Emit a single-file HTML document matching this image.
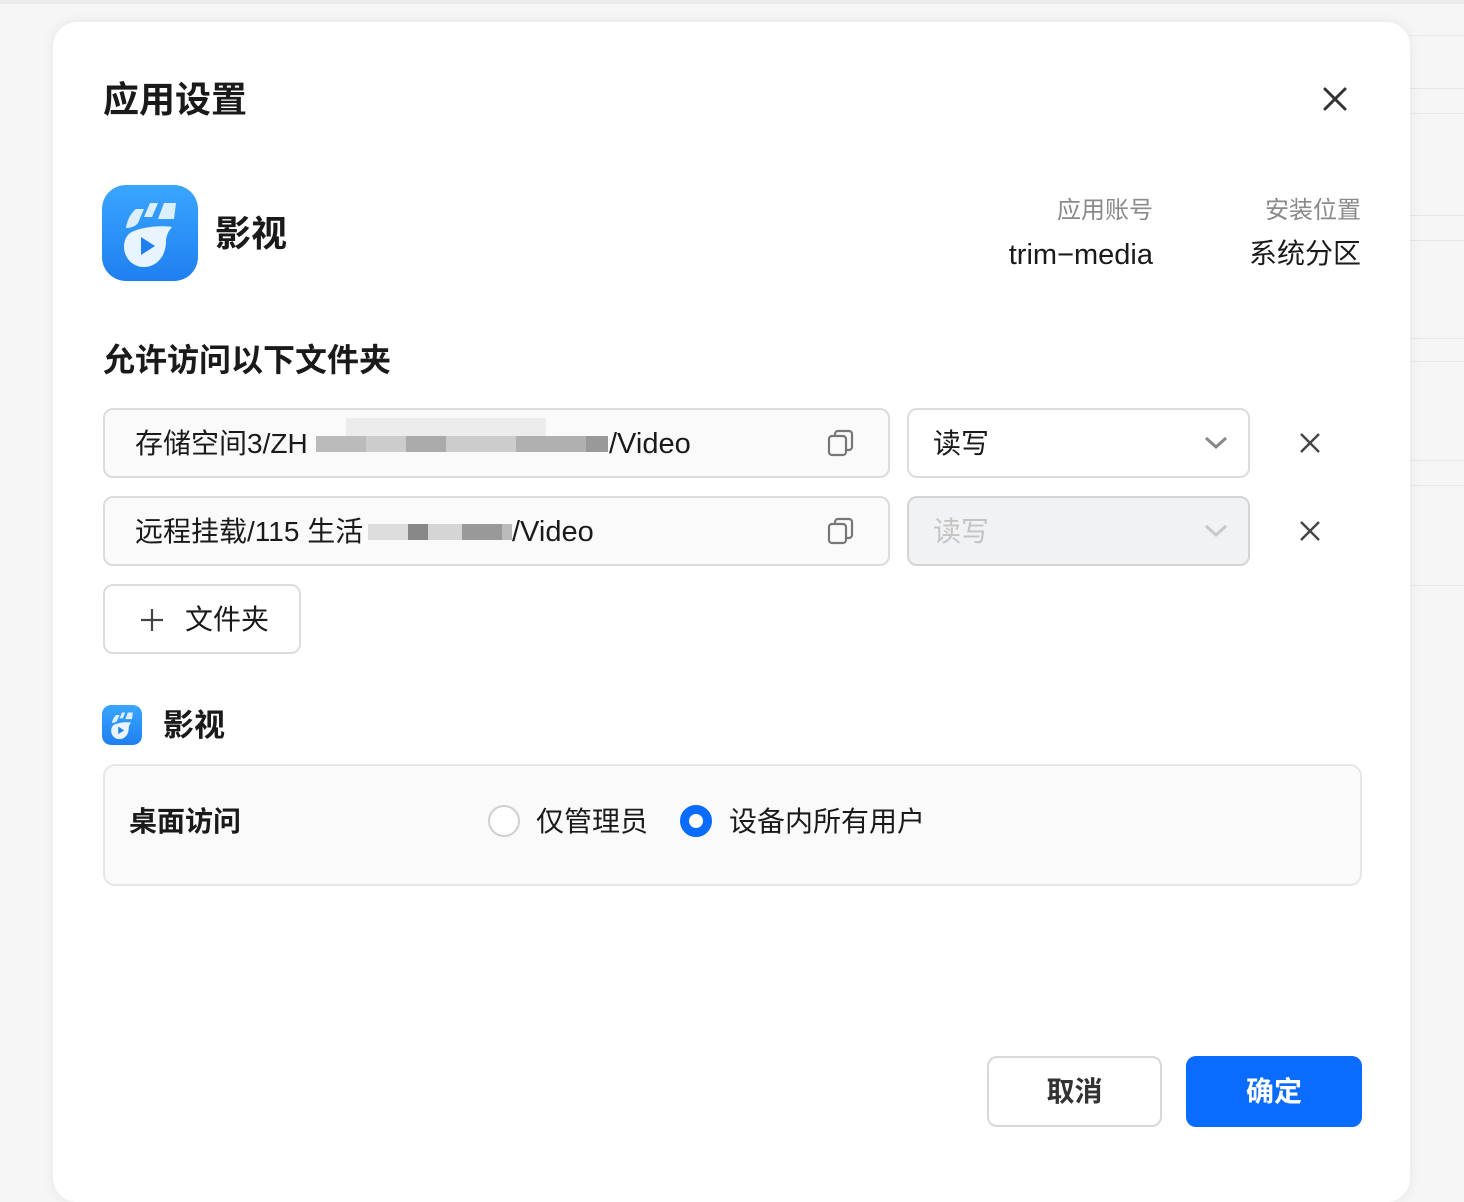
<!DOCTYPE html>
<html><head><meta charset="utf-8"><style>
*{box-sizing:border-box;margin:0;padding:0}
body{width:1464px;height:1176px;overflow:hidden;background:#f6f6f6;font-family:"Liberation Sans","Noto Sans CJK SC",sans-serif;color:#1a1a1a;position:relative}
.bgline{position:absolute;left:1410px;right:0;height:1px;background:#e8e8e8}
.modal{position:absolute;left:53px;top:22px;width:1357px;height:1180px;background:#fff;border-radius:24px;box-shadow:0 0 12px rgba(0,0,0,.08)}
.a{position:absolute}
.t{white-space:nowrap;line-height:1}
.inp{position:absolute;height:70px;border:2px solid #dcdcdc;border-radius:10px;background:#fafafa}
.blk{position:absolute;height:16px;top:28px}
</style></head><body>
<div style="position:absolute;left:0;top:0;right:0;height:4px;background:#ececec"></div>
<div class="bgline" style="top:35px"></div><div class="bgline" style="top:88px"></div><div class="bgline" style="top:113px"></div><div class="bgline" style="top:215px"></div><div class="bgline" style="top:240px"></div><div class="bgline" style="top:338px"></div><div class="bgline" style="top:361px"></div><div class="bgline" style="top:460px"></div><div class="bgline" style="top:485px"></div><div class="bgline" style="top:585px"></div>
<div class="modal"></div>

<div class="a t" style="left:103px;top:82px;font-size:36px;font-weight:bold">应用设置</div>
<svg class="a" style="left:1322px;top:86px" width="26" height="26" viewBox="0 0 26 26"><path d="M3 3L23 23M23 3L3 23" stroke="#333" stroke-width="3" stroke-linecap="round"/></svg>

<svg class="a" style="left:102px;top:185px" width="96" height="96" viewBox="0 0 96 96">
<defs><linearGradient id="g" x1="0" y1="0" x2="0" y2="1"><stop offset="0" stop-color="#3aa6ff"/><stop offset="1" stop-color="#1f7ff0"/></linearGradient></defs>
<rect width="96" height="96" rx="24" fill="url(#g)"/>
<path d="M34 24h8l-6 14c-3 4-8 5-12 5 1-8 5-15 10-19z" fill="#dcefff"/>
<path d="M48 18h8l-6 14h-8z" fill="#dcefff"/><path d="M62 18h12l-2 16h-16z" fill="#dcefff"/>
<path d="M28 48c10-6 30-8 42-6-4 4-6 10-6 14 0 16-10 26-22 26-12 0-20-10-20-20 0-6 2-11 6-14z" fill="#e8f4ff"/>
<path d="M39 52l14 9-14 9z" fill="#1f7ff0"/>
</svg>
<div class="a t" style="left:215px;top:216px;font-size:36px;font-weight:bold">影视</div>

<div class="a t" style="right:311px;top:199px;font-size:24px;color:#8a8a8a">应用账号</div>
<div class="a t" style="right:311px;top:241px;font-size:29px">trim−media</div>
<div class="a t" style="right:103px;top:199px;font-size:24px;color:#8a8a8a">安装位置</div>
<div class="a t" style="right:103px;top:240px;font-size:28px">系统分区</div>

<div class="a t" style="left:103px;top:344px;font-size:32px;font-weight:bold">允许访问以下文件夹</div>

<div class="inp" style="left:103px;top:408px;width:787px"></div>
<div class="a t" style="left:135px;top:430px;font-size:28px">存储空间3/ZH</div>
<div class="a" style="left:316px;top:408px;width:292px;height:70px">
<div class="blk" style="left:0;width:50px;background:#bbb"></div><div class="blk" style="left:50px;width:40px;background:#ccc"></div><div class="blk" style="left:90px;width:40px;background:#aaa"></div><div class="blk" style="left:130px;width:70px;background:#ccc"></div><div class="blk" style="left:200px;width:70px;background:#b0b0b0"></div><div class="blk" style="left:270px;width:22px;background:#999"></div>
<div style="position:absolute;left:30px;top:10px;width:200px;height:18px;background:#ececec"></div></div>
<div class="a t" style="left:609px;top:430px;font-size:29px">/Video</div>
<svg class="a" style="left:826px;top:428px" width="30" height="30" viewBox="0 0 30 30"><rect x="3" y="8" width="17" height="19" rx="3" fill="none" stroke="#777" stroke-width="2.2"/><path d="M9 8V6a3 3 0 0 1 3-3h11a3 3 0 0 1 3 3v13a3 3 0 0 1-3 3h-3" fill="none" stroke="#777" stroke-width="2.2"/></svg>

<div class="inp" style="left:907px;top:408px;width:343px;background:#fff"></div>
<div class="a t" style="left:933px;top:430px;font-size:28px">读写</div>
<svg class="a" style="left:1204px;top:436px" width="24" height="14" viewBox="0 0 24 14"><path d="M2 2l10 9 10-9" fill="none" stroke="#888" stroke-width="3"/></svg>
<svg class="a" style="left:1300px;top:433px" width="20" height="20" viewBox="0 0 20 20"><path d="M1 1L19 19M19 1L1 19" stroke="#444" stroke-width="2.4"/></svg>

<div class="inp" style="left:103px;top:496px;width:787px"></div>
<div class="a t" style="left:135px;top:518px;font-size:28px">远程挂载/115 生活</div>
<div class="a" style="left:368px;top:496px;width:144px;height:70px">
<div class="blk" style="left:0;width:40px;background:#ddd"></div><div class="blk" style="left:40px;width:20px;background:#888"></div><div class="blk" style="left:60px;width:34px;background:#d5d5d5"></div><div class="blk" style="left:94px;width:40px;background:#999"></div><div class="blk" style="left:134px;width:10px;background:#bbb"></div></div>
<div class="a t" style="left:512px;top:518px;font-size:29px">/Video</div>
<svg class="a" style="left:826px;top:516px" width="30" height="30" viewBox="0 0 30 30"><rect x="3" y="8" width="17" height="19" rx="3" fill="none" stroke="#777" stroke-width="2.2"/><path d="M9 8V6a3 3 0 0 1 3-3h11a3 3 0 0 1 3 3v13a3 3 0 0 1-3 3h-3" fill="none" stroke="#777" stroke-width="2.2"/></svg>

<div class="inp" style="left:907px;top:496px;width:343px;background:#f1f2f4;border-color:#d4d4d4"></div>
<div class="a t" style="left:933px;top:518px;font-size:28px;color:#c4c4c4">读写</div>
<svg class="a" style="left:1204px;top:524px" width="24" height="14" viewBox="0 0 24 14"><path d="M2 2l10 9 10-9" fill="none" stroke="#c8c8c8" stroke-width="3"/></svg>
<svg class="a" style="left:1300px;top:521px" width="20" height="20" viewBox="0 0 20 20"><path d="M1 1L19 19M19 1L1 19" stroke="#444" stroke-width="2.4"/></svg>

<div class="inp" style="left:103px;top:584px;width:198px;background:#fff"></div>
<svg class="a" style="left:140px;top:608px" width="24" height="24" viewBox="0 0 24 24"><path d="M12 1v22M1 12h22" stroke="#444" stroke-width="2.2"/></svg>
<div class="a t" style="left:185px;top:606px;font-size:28px">文件夹</div>

<svg class="a" style="left:102px;top:705px" width="40" height="40" viewBox="0 0 96 96">
<rect width="96" height="96" rx="22" fill="url(#g)"/>
<path d="M34 24h8l-6 14c-3 4-8 5-12 5 1-8 5-15 10-19z" fill="#dcefff"/>
<path d="M48 18h8l-6 14h-8z" fill="#dcefff"/><path d="M62 18h12l-2 16h-16z" fill="#dcefff"/>
<path d="M28 48c10-6 30-8 42-6-4 4-6 10-6 14 0 16-10 26-22 26-12 0-20-10-20-20 0-6 2-11 6-14z" fill="#e8f4ff"/>
<path d="M39 52l14 9-14 9z" fill="#1f7ff0"/>
</svg>
<div class="a t" style="left:163px;top:710px;font-size:31px;font-weight:bold">影视</div>

<div class="a" style="left:103px;top:764px;width:1259px;height:122px;border:2px solid #e6e6e6;border-radius:12px;background:#fafafa"></div>
<div class="a t" style="left:129px;top:808px;font-size:28px;font-weight:bold">桌面访问</div>
<div class="a" style="left:488px;top:805px;width:32px;height:32px;border:2.5px solid #cfcfcf;border-radius:50%;background:#fff"></div>
<div class="a t" style="left:536px;top:808px;font-size:28px">仅管理员</div>
<div class="a" style="left:680px;top:805px;width:32px;height:32px;border:9px solid #0a6bff;border-radius:50%;background:#fff"></div>
<div class="a t" style="left:729px;top:808px;font-size:28px">设备内所有用户</div>

<div class="a" style="left:987px;top:1056px;width:175px;height:71px;border:2px solid #d8d8d8;border-radius:10px;background:#fff"></div>
<div class="a t" style="left:987px;top:1078px;width:175px;text-align:center;font-size:28px;font-weight:bold;color:#333">取消</div>
<div class="a" style="left:1186px;top:1056px;width:176px;height:71px;border-radius:10px;background:#0a6bff"></div>
<div class="a t" style="left:1186px;top:1078px;width:176px;text-align:center;font-size:28px;font-weight:bold;color:#fff">确定</div>
</body></html>
